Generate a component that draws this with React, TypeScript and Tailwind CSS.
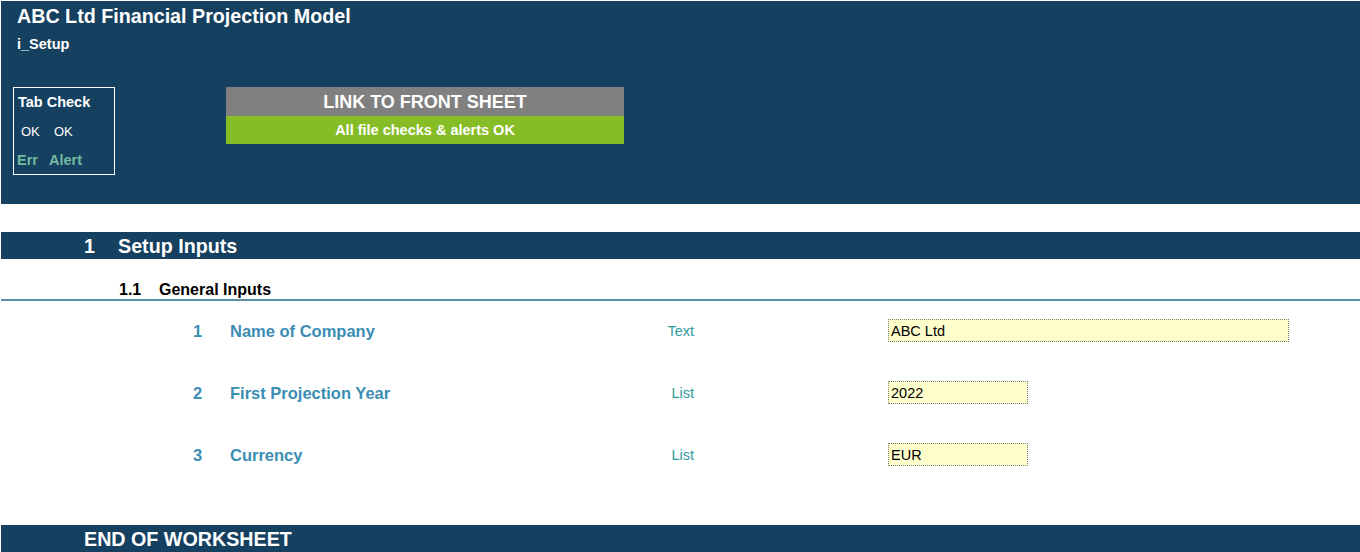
import React from "react";

const rows = [
  { n: "1", label: "Name of Company", kind: "Text", value: "ABC Ltd", w: "w-[401px]" },
  { n: "2", label: "First Projection Year", kind: "List", value: "2022", w: "w-[140px]" },
  { n: "3", label: "Currency", kind: "List", value: "EUR", w: "w-[140px]" },
];

export default function App() {
  return (
    <div
      className="w-[1360px] h-[552px] overflow-hidden bg-white"
      style={{ fontFamily: '"Liberation Sans", Arial, sans-serif' }}
    >
      {/* header block */}
      <div className="ml-[1px] mt-[1px] h-[203px] bg-[#16405f] text-white">
        <div className="h-[30px] pl-[16px] text-[19.7px] font-bold leading-[30px]">
          ABC Ltd Financial Projection Model
        </div>
        <div className="h-[26px] pl-[16px] text-[14.5px] font-bold leading-[27px]">
          i_Setup
        </div>
        <div className="mt-[30px] flex items-start pl-[12px]">
          <div className="h-[88px] w-[102px] border border-white">
            <div className="h-[27px] pl-[4px] text-[14.5px] font-bold leading-[29px]">
              Tab Check
            </div>
            <div className="flex h-[30px] pl-[7px] text-[13px] leading-[33px]">
              <span className="w-[33px]">OK</span>
              <span>OK</span>
            </div>
            <div className="flex h-[28px] pl-[3px] text-[14.5px] font-bold leading-[30px] text-[#74b9a1]">
              <span className="w-[32px]">Err</span>
              <span>Alert</span>
            </div>
          </div>
          <div className="ml-[111px] w-[398px]">
            <div className="h-[29px] bg-[#808080] text-center text-[18px] font-bold leading-[31px]">
              LINK TO FRONT SHEET
            </div>
            <div className="h-[28px] bg-[#86bc25] text-center text-[14.5px] font-bold leading-[29px]">
              All file checks &amp; alerts OK
            </div>
          </div>
        </div>
      </div>

      {/* section 1 bar */}
      <div className="ml-[1px] mt-[28px] flex h-[27px] bg-[#16405f] pl-[83px] text-[19.7px] font-bold leading-[29px] text-white">
        <span className="w-[34px]">1</span>
        <span>Setup Inputs</span>
      </div>

      {/* subsection */}
      <div className="ml-[1px] flex h-[40px] pl-[118px] pt-[21px] text-[16px] font-bold leading-[20px] text-black">
        <span className="w-[40px]">1.1</span>
        <span>General Inputs</span>
      </div>
      <div className="ml-[1px] h-[2px] bg-[#5a8fa6]" />

      {/* input rows */}
      <div className="ml-[1px] mt-[18px] flex flex-col gap-[39px]">
        {rows.map((r) => (
          <div key={r.n} className="flex h-[23px] items-center pl-[192px] pt-[2px]">
            <span className="w-[37px] text-[16.5px] font-bold text-[#3b8db4]">{r.n}</span>
            <span className="w-[300px] text-[16.5px] font-bold text-[#3b8db4]">{r.label}</span>
            <span className="w-[164px] text-right text-[14.5px] text-[#2f9a9c]">{r.kind}</span>
            <span className="w-[194px]" />
            <div
              className={`${r.w} -mt-[2px] h-[23px] border border-dotted border-[#7a7a7a] bg-[#ffffcc] pl-[2px] text-[14.5px] leading-[22px] text-black`}
            >
              {r.value}
            </div>
          </div>
        ))}
      </div>

      {/* end bar */}
      <div className="ml-[1px] mt-[59px] h-[27px] bg-[#16405f] pl-[83px] text-[19.7px] font-bold leading-[29px] text-white">
        END OF WORKSHEET
      </div>
    </div>
  );
}
